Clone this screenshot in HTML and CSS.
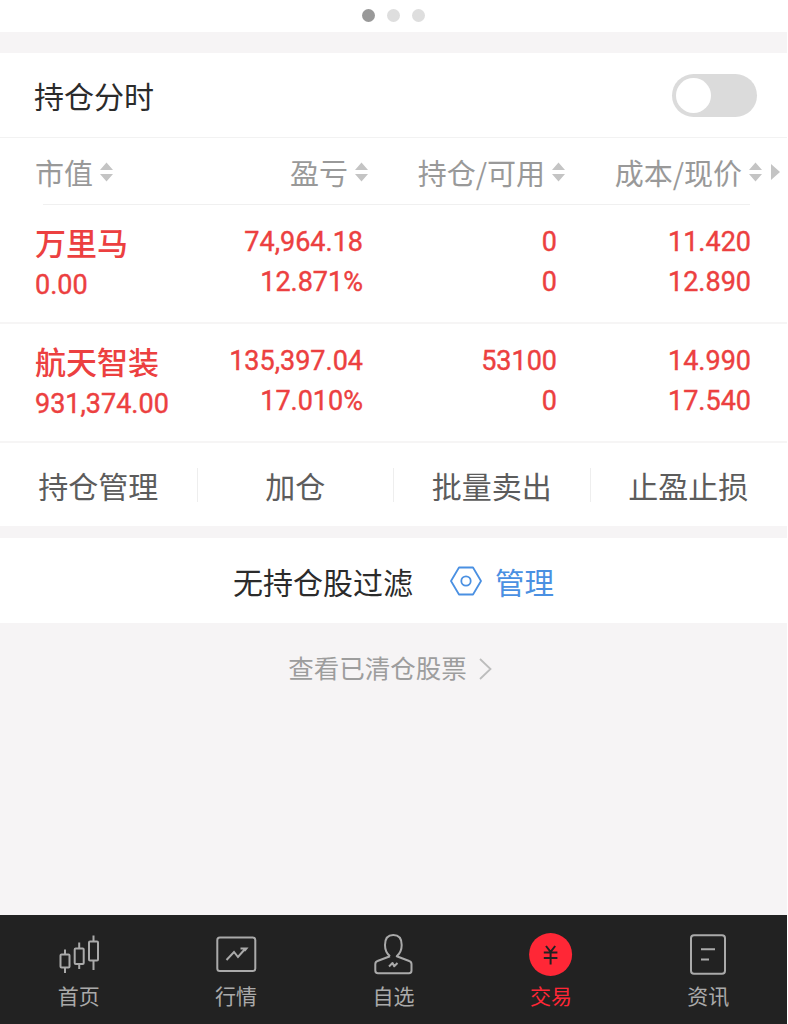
FILE: index.html
```
<!DOCTYPE html>
<html lang="zh-CN">
<head>
  <meta charset="UTF-8" />
  <meta name="viewport" content="width=device-width, initial-scale=1.0" />
  <title>持仓</title>
  <link rel="stylesheet" href="styles.css">
</head>
<body>
  <div class="app">
    <div class="pager">
      <span class="dot active"></span>
      <span class="dot"></span>
      <span class="dot"></span>
    </div>

    <div class="toggle-row">
      <span>持仓分时</span>
      <span class="switch"></span>
    </div>

    <div class="table-head">
      <div class="th">市值<svg class="sort" viewBox="0 0 13 20"><path d="M6.5 0.5L13 8H0zM6.5 19.5L13 12H0z"/></svg></div>
      <div class="th">盈亏<svg class="sort" viewBox="0 0 13 20"><path d="M6.5 0.5L13 8H0zM6.5 19.5L13 12H0z"/></svg></div>
      <div class="th">持仓/可用<svg class="sort" viewBox="0 0 13 20"><path d="M6.5 0.5L13 8H0zM6.5 19.5L13 12H0z"/></svg></div>
      <div class="th">成本/现价<svg class="sort" viewBox="0 0 13 20"><path d="M6.5 0.5L13 8H0zM6.5 19.5L13 12H0z"/></svg></div>
      <svg class="more" viewBox="0 0 9 16"><path d="M0 0L9 8L0 16z"/></svg>
    </div>
    <div class="head-line"></div>

    <div class="stock">
      <div class="name"><b>万里马</b><span>0.00</span></div>
      <div class="num"><span>74,964.18</span><span>12.871%</span></div>
      <div class="num"><span>0</span><span>0</span></div>
      <div class="num"><span>11.420</span><span>12.890</span></div>
    </div>
    <div class="stock">
      <div class="name"><b>航天智装</b><span>931,374.00</span></div>
      <div class="num"><span>135,397.04</span><span>17.010%</span></div>
      <div class="num"><span>53100</span><span>0</span></div>
      <div class="num"><span>14.990</span><span>17.540</span></div>
    </div>

    <div class="actions">
      <a>持仓管理</a>
      <a>加仓</a>
      <a>批量卖出</a>
      <a>止盈止损</a>
    </div>

    <div class="filter">
      <span>无持仓股过滤</span>
      <svg class="gear" viewBox="0 0 32 30" fill="none" stroke="#4a90e2" stroke-width="1.8">
        <path d="M9 1.5H23L31 15L23 28.5H9L1 15z" stroke-linejoin="round"/>
        <circle cx="16" cy="15" r="4.7"/>
      </svg>
      <a>管理</a>
    </div>

    <div class="cleared">
      <span>查看已清仓股票</span>
      <svg viewBox="0 0 13 22" fill="none" stroke="#bdbdbd" stroke-width="1.8"><path d="M1 1L11.5 11L1 21"/></svg>
    </div>

    <div class="tabbar">
      <a class="tab">
        <svg viewBox="0 0 44 44" fill="none" stroke="#aaa" stroke-width="2">
          <rect x="3.5" y="21.5" width="9" height="13" rx="1"/>
          <path d="M8 16.500V21.500M8 34.500V40"/>
          <rect x="17.700" y="15.500" width="9" height="15.500" rx="1"/>
          <path d="M22.200 9.500V15.500M22.200 31V36"/>
          <rect x="32" y="8.500" width="9" height="19" rx="1"/>
          <path d="M36.500 2.500V8.500M36.500 27.500V37"/>
        </svg>
        <span>首页</span>
      </a>
      <a class="tab">
        <svg viewBox="0 0 44 44" fill="none" stroke="#aaa" stroke-width="2">
          <rect x="3.300" y="4.500" width="38" height="33.500" rx="2.500"/>
          <path d="M12.500 27L20 19L24 24L31 16M26.500 15.500H32.500L30.500 18"/>
        </svg>
        <span>行情</span>
      </a>
      <a class="tab">
        <svg viewBox="0 0 44 44" fill="none" stroke="#aaa" stroke-width="2" stroke-linejoin="round">
          <path d="M19 23.200C15.500 20.500 14 16.500 14 12C14 5.500 17 2 22.300 2C27.500 2 30.700 5.500 30.700 12C30.700 16.500 29 20.500 25.700 23.200L38.200 28C39.700 28.500 40.500 29.500 40.500 31.300V37.500C40.500 39.500 39.500 40.300 38 40.300H7C5.300 40.300 4.300 39.500 4.300 37.500V31.300C4.300 29.500 5 28.500 6.500 28L19 23.200"/>
          <path d="M18 33.500L21.500 30L23.200 33.300L26.500 30"/>
        </svg>
        <span>自选</span>
      </a>
      <a class="tab active">
        <svg viewBox="0 0 44 44" fill="none" stroke="#222" stroke-width="2">
          <circle cx="21.600" cy="21.500" r="21.500" fill="#ff2736" stroke="none"/>
          <path d="M17 13L21.600 18.800L26.200 13M14.800 19.500H28.400M14.800 25H28.400M21.600 18.500V31.500"/>
        </svg>
        <span>交易</span>
      </a>
      <a class="tab">
        <svg viewBox="0 0 44 44" fill="none" stroke="#aaa" stroke-width="2">
          <rect x="5" y="2.300" width="34" height="38.500" rx="3"/>
          <path d="M15 16.300H29M15 26.500H23"/>
        </svg>
        <span>资讯</span>
      </a>
    </div>
  </div>
</body>
</html>
```

FILE: styles.css
```
* { box-sizing: border-box; }
body { margin: 0; background: #fff; font-family: "Noto Sans CJK SC", sans-serif; }
.app { width: 787px; height: 1024px; display: flex; flex-direction: column; background: #f6f4f5; }

.pager { height: 32px; display: flex; justify-content: center; gap: 12px; padding-top: 9px; background: #fff; }
.dot { width: 13px; height: 13px; border-radius: 50%; background: #dedede; }
.dot.active { background: #999; }

.toggle-row { height: 85px; margin-top: 21px; padding: 0 30px 0 34px; display: flex; align-items: center; justify-content: space-between; background: #fff; border-bottom: 1px solid #f2f2f2; font-size: 30px; color: #2b2b2b; }
.switch { width: 85px; height: 43px; padding: 4px; border-radius: 22px; background: #dbdbdb; }
.switch::before { content: ""; display: block; width: 35px; height: 35px; border-radius: 50%; background: #fff; }

.table-head { height: 66px; padding: 1px 0 0 35px; display: grid; grid-template-columns: 160px 173px 197px 197px 18px; align-items: center; background: #fff; font-size: 29px; color: #999; }
.th { display: flex; align-items: center; justify-content: flex-end; gap: 7px; white-space: nowrap; }
.th:first-child { justify-content: flex-start; }
.sort { width: 13px; height: 20px; fill: #c4c4c4; }
.more { width: 9px; height: 16px; margin-left: 9px; fill: #c4c4c4; }
.head-line { height: 1px; padding: 0 37px 0 43px; background: #fff; }
.head-line::before { content: ""; display: block; height: 1px; background: #f0f0f0; }

.stock { height: 119px; padding: 17px 0 0 35px; display: grid; grid-template-columns: 160px 168px 194px 194px; background: #fff; border-bottom: 2px solid #f6f5f5; color: #ec4040; font: 400 27px/40px Roboto, "Noto Sans CJK SC", sans-serif; -webkit-text-stroke: 0.4px #ec4040; }
.name, .num { display: flex; flex-direction: column; }
.name b { font: 500 31px/39px "Noto Sans CJK SC", sans-serif; -webkit-text-stroke: 0; }
.name span { margin-top: 4px; }
.num { align-items: flex-end; }

.actions { height: 83px; padding-right: 1px; display: grid; grid-template-columns: repeat(4, 1fr); align-items: center; background: #fff; font-size: 30px; color: #5c5c5c; }
.actions a { height: 34px; line-height: 34px; text-align: center; border-left: 1px solid #eee; }
.actions a:first-child { border-left: none; }

.filter { height: 85px; margin-top: 12px; display: flex; align-items: center; justify-content: center; background: #fff; font-size: 30px; color: #2b2b2b; }
.gear { width: 32px; height: 30px; margin: 0 13px 0 37px; }
.filter a { color: #4a90e2; font-size: 29.5px; }

.cleared { height: 90px; display: flex; align-items: center; justify-content: center; gap: 12px; padding-right: 7px; font-size: 25.5px; color: #9d9d9d; }
.cleared span { padding-bottom: 3px; }
.cleared svg { width: 13px; height: 22px; margin-top: 2px; }

.tabbar { height: 109px; margin-top: auto; padding-top: 18px; display: grid; grid-template-columns: repeat(5, 1fr); background: #222; color: #aaa; font-size: 21px; }
.tab { display: flex; flex-direction: column; align-items: center; }
.tab svg { width: 44px; height: 44px; }
.tab span { margin-top: 2px; line-height: 32px; }
.tab.active { color: #ff2736; }
```
